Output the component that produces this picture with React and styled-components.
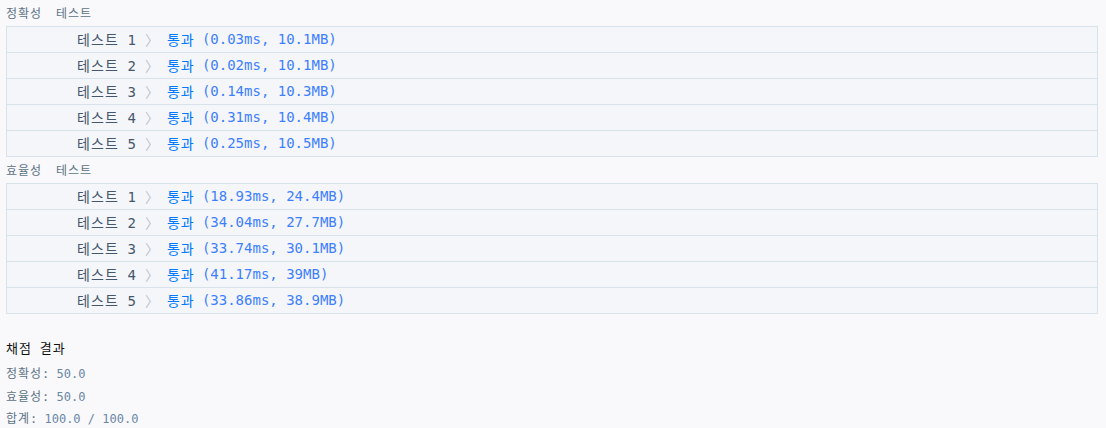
import styled, { createGlobalStyle } from "styled-components";
import React from "react";

const accuracy = [
    { time: "0.03ms", mem: "10.1MB" },
    { time: "0.02ms", mem: "10.1MB" },
    { time: "0.14ms", mem: "10.3MB" },
    { time: "0.31ms", mem: "10.4MB" },
    { time: "0.25ms", mem: "10.5MB" },
];

const efficiency = [
    { time: "18.93ms", mem: "24.4MB" },
    { time: "34.04ms", mem: "27.7MB" },
    { time: "33.74ms", mem: "30.1MB" },
    { time: "41.17ms", mem: "39MB" },
    { time: "33.86ms", mem: "38.9MB" },
];

function ResultTable({ rows }) {
    return (
        <Table>
            {rows.map((r, i) => (
                <Row key={i}>
                    <Label><Ko>테스트</Ko> {i + 1}</Label>
                    <Arrow>〉</Arrow>
                    <Pass><Ko>통과</Ko></Pass>
                    <Detail>({r.time}, {r.mem})</Detail>
                </Row>
            ))}
        </Table>
    );
}

export default function App() {
    return (
        <>
            <Global />
            <Page>
                <SectionTitle><Ko>정확성</Ko><Ko $gap>테스트</Ko></SectionTitle>
                <ResultTable rows={accuracy} />
                <SectionTitle><Ko>효율성</Ko><Ko $gap>테스트</Ko></SectionTitle>
                <ResultTable rows={efficiency} />

                <Summary>
                    <SummaryTitle><Ko>채점</Ko> <Ko>결과</Ko></SummaryTitle>
                    <ScoreLine><Ko>정확성</Ko>: <Value>50.0</Value></ScoreLine>
                    <ScoreLine><Ko>효율성</Ko>: <Value>50.0</Value></ScoreLine>
                    <ScoreLine><Ko>합계</Ko>: <Value>100.0 / 100.0</Value></ScoreLine>
                </Summary>
            </Page>
        </>
    );
}

const Global = createGlobalStyle`
    html, body {
        margin: 0;
        padding: 0;
        background-color: #f9f9fc;
    }
    body {
        font-family: "DejaVu Sans Mono", "Noto Sans CJK KR", monospace;
    }
`;

const Page = styled.div`
    width: 1106px;
    height: 428px;
    box-sizing: border-box;
    padding: 0 8px 0 6px;
    background-color: #f9f9fc;
    font-family: "DejaVu Sans Mono", "Noto Sans CJK KR", monospace;
`;

// hangul in the reference is full width, Noto's is a bit narrower
const Ko = styled.span`
    letter-spacing: 0.08em;
    margin-left: ${p => (p.$gap ? "14px" : "0")};
`;

const SectionTitle = styled.div`
    font-size: 12px;
    line-height: 24px;
    height: 26px;
    box-sizing: border-box;
    padding-top: 2px;
    color: #5d7384;
`;

const Table = styled.div`
    display: flex;
    flex-direction: column;
    border: 1px solid #d7e2eb;
    background-color: #f5f6fa;
`;

const Row = styled.div`
    display: flex;
    align-items: center;
    height: 25px;
    box-sizing: border-box;
    padding: 0 0 2px 70px;
    font-size: 14px;
    white-space: pre;
    border-top: 1px solid #d7e2eb;
    &:first-child {
        border-top: 0;
        height: 25px;
    }
    & + & {
        height: 26px;
    }
`;

const Label = styled.span`
    color: #44576c;
`;

const Arrow = styled.span`
    color: #b8c4ce;
    margin: 0 8px 0 9px;
`;

const Pass = styled.span`
    color: #0078ff;
    margin-right: 7px;
`;

const Detail = styled.span`
    color: #3d7fff;
`;

const Summary = styled.div`
    padding-top: 24px;
    display: flex;
    flex-direction: column;
`;

const SummaryTitle = styled.div`
    font-size: 13px;
    line-height: 22px;
    color: #111111;
    margin-bottom: 3px;
    white-space: pre;
`;

const ScoreLine = styled.div`
    font-size: 12px;
    line-height: 22.5px;
    color: #5d7384;
    white-space: pre;
`;

const Value = styled.span`
    color: #6a87a6;
`;
